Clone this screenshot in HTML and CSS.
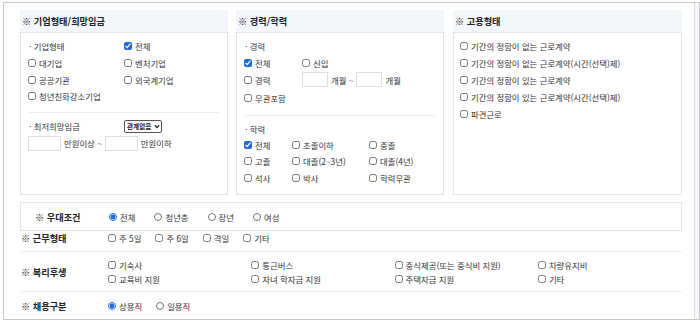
FILE: index.html
```html
<!DOCTYPE html>
<html lang="ko">
<head>
    <meta charset="UTF-8">
    <title>상세검색</title>
    <link rel="stylesheet" href="styles.css">
</head>
<body>
    <div class="frame">
        <div class="content">
            <div class="cols">
                <section class="panel panel-company">
                    <h3 class="panel-title">※ 기업형태/희망임금</h3>
                    <div class="panel-body">
                        <div class="grid grid-company">
                            <span class="sub">· 기업형태</span>
                            <label class="chk"><input type="checkbox" checked>전체</label>
                            <label class="chk"><input type="checkbox">대기업</label>
                            <label class="chk"><input type="checkbox">벤처기업</label>
                            <label class="chk"><input type="checkbox">공공기관</label>
                            <label class="chk"><input type="checkbox">외국계기업</label>
                            <label class="chk"><input type="checkbox">청년친화강소기업</label>
                        </div>
                        <hr class="sep">
                        <div class="grid grid-company">
                            <span class="sub">· 최저희망임금</span>
                            <div class="select"><span>관계없음</span>
                                <svg width="6" height="5" viewBox="0 0 6 5"><path d="M0.8 1.2 L3 3.6 L5.2 1.2" fill="none" stroke="#222" stroke-width="1.3"/></svg>
                            </div>
                        </div>
                        <div class="range">
                            <input type="text" class="num">
                            <span>만원이상 ~</span>
                            <input type="text" class="num">
                            <span>만원이하</span>
                        </div>
                    </div>
                </section>

                <section class="panel panel-career">
                    <h3 class="panel-title">※ 경력/학력</h3>
                    <div class="panel-body">
                        <div class="sub sub-line">· 경력</div>
                        <div class="grid grid-career">
                            <label class="chk"><input type="checkbox" checked>전체</label>
                            <label class="chk"><input type="checkbox">신입</label>
                            <label class="chk"><input type="checkbox">경력</label>
                            <div class="range range-month">
                                <input type="text" class="num num-sm">
                                <span>개월 ~</span>
                                <input type="text" class="num num-sm">
                                <span>개월</span>
                            </div>
                            <label class="chk"><input type="checkbox">무관포함</label>
                        </div>
                        <hr class="sep sep-career">
                        <div class="sub sub-line">· 학력</div>
                        <div class="grid grid-edu">
                            <label class="chk"><input type="checkbox" checked>전체</label>
                            <label class="chk"><input type="checkbox">초졸이하</label>
                            <label class="chk"><input type="checkbox">중졸</label>
                            <label class="chk"><input type="checkbox">고졸</label>
                            <label class="chk"><input type="checkbox">대졸(2~3년)</label>
                            <label class="chk"><input type="checkbox">대졸(4년)</label>
                            <label class="chk"><input type="checkbox">석사</label>
                            <label class="chk"><input type="checkbox">박사</label>
                            <label class="chk"><input type="checkbox">학력무관</label>
                        </div>
                    </div>
                </section>

                <section class="panel panel-employ">
                    <h3 class="panel-title">※ 고용형태</h3>
                    <div class="panel-body">
                        <div class="list">
                            <label class="chk"><input type="checkbox">기간의 정함이 없는 근로계약</label>
                            <label class="chk"><input type="checkbox">기간의 정함이 없는 근로계약(시간(선택)제)</label>
                            <label class="chk"><input type="checkbox">기간의 정함이 있는 근로계약</label>
                            <label class="chk"><input type="checkbox">기간의 정함이 있는 근로계약(시간(선택)제)</label>
                            <label class="chk"><input type="checkbox">파견근로</label>
                        </div>
                    </div>
                </section>
            </div>

            <div class="pref">
                <span class="row-label">※ 우대조건</span>
                <div class="opts">
                    <label class="chk"><input type="radio" name="pref" checked>전체</label>
                    <label class="chk"><input type="radio" name="pref">청년층</label>
                    <label class="chk"><input type="radio" name="pref">장년</label>
                    <label class="chk"><input type="radio" name="pref">여성</label>
                </div>
            </div>

            <div class="row row-work">
                <span class="row-label">※ 근무형태</span>
                <div class="opts opts-work">
                    <label class="chk"><input type="checkbox">주 5일</label>
                    <label class="chk"><input type="checkbox">주 6일</label>
                    <label class="chk"><input type="checkbox">격일</label>
                    <label class="chk"><input type="checkbox">기타</label>
                </div>
            </div>

            <div class="row row-welfare">
                <span class="row-label">※ 복리후생</span>
                <div class="grid grid-welfare">
                    <label class="chk"><input type="checkbox">기숙사</label>
                    <label class="chk"><input type="checkbox">통근버스</label>
                    <label class="chk"><input type="checkbox">중식제공(또는 중식비 지원)</label>
                    <label class="chk"><input type="checkbox">차량유지비</label>
                    <label class="chk"><input type="checkbox">교육비 지원</label>
                    <label class="chk"><input type="checkbox">자녀 학자금 지원</label>
                    <label class="chk"><input type="checkbox">주택자금 지원</label>
                    <label class="chk"><input type="checkbox">기타</label>
                </div>
            </div>

            <div class="row row-hire">
                <span class="row-label">※ 채용구분</span>
                <div class="opts opts-hire">
                    <label class="chk"><input type="radio" name="hire" checked>상용직</label>
                    <label class="chk"><input type="radio" name="hire">일용직</label>
                </div>
            </div>
        </div>
        <div class="scrollbar"></div>
    </div>
</body>
</html>
```

FILE: styles.css
```css
* { margin: 0; padding: 0; box-sizing: border-box; }

body {
    font-family: "Noto Sans CJK KR", "Noto Sans", sans-serif;
    font-size: 8.4px;
    color: #333;
    background: #fff;
}

.frame {
    display: flex;
    width: 697px;
    height: 318px;
    margin: 2px 0 0 3px;
    border: 1px solid #c7c9cc;
}

.content {
    flex: 1;
    padding: 7px 12px 0 16px;
}

.scrollbar {
    width: 6px;
    border-left: 1px solid #d9dde2;
    background: #f6f8fa;
}

.cols {
    display: flex;
    gap: 8px;
}

.panel-company,
.panel-career { width: 208px; }
.panel-employ { width: 229px; margin-left: 1px; }

.panel-title {
    height: 22px;
    line-height: 22px;
    padding-left: 2px;
    font-size: 9.2px;
    font-weight: bold;
    color: #222;
    background: #f3f6fb;
}

.panel-body {
    height: 163px;
    border: 1px solid #e2e5e9;
    padding: 5px 7px 0 7px;
}

.grid {
    display: grid;
    align-items: center;
}

.grid-company {
    grid-template-columns: 96px 1fr;
    grid-auto-rows: 16.7px;
}

.sub { color: #333; padding-left: 1px; }
.sub-line { height: 16.5px; line-height: 16.5px; }

.chk {
    display: flex;
    align-items: center;
    gap: 3px;
    white-space: nowrap;
}

.chk input {
    width: 8px;
    height: 8px;
    margin: 0;
    accent-color: #1f6ad6;
    flex: none;
}

.sep {
    border: none;
    border-top: 1px solid #eceef1;
    margin: 7px 0 5px;
}

.select {
    display: flex;
    align-items: center;
    justify-content: space-between;
    width: 38px;
    height: 13px;
    padding: 0 1px 0 2px;
    border: 1px solid #555;
    border-radius: 2px;
    font-size: 6.6px;
    font-weight: bold;
    color: #222;
    white-space: nowrap;
}

.range {
    display: flex;
    align-items: center;
    gap: 3px;
    height: 18px;
}

.num {
    width: 33px;
    height: 15px;
    border: 1px solid #dcdfe3;
    background: #fff;
}

.num-sm { width: 26px; }

.grid-career {
    grid-template-columns: 58px 1fr;
    grid-template-rows: 16.5px 17.5px 19px;
}

.sep-career { margin: 7px 0 5px; }

.grid-edu {
    grid-template-columns: 48px 77px 1fr;
    grid-auto-rows: 16.3px;
}

.list {
    display: grid;
    grid-auto-rows: 16.8px;
    align-items: center;
    margin-left: -1px;
}

.pref {
    display: flex;
    align-items: center;
    height: 29px;
    margin-top: 7px;
    border: 1px solid #e2e5e9;
    padding-left: 14px;
}

.row-label {
    font-size: 9.2px;
    font-weight: bold;
    color: #222;
    width: 73px;
    flex: none;
}

.pref .row-label { width: 74px; }

.opts {
    display: flex;
    gap: 19px;
}

.opts-work { gap: 14px; }
.opts-hire { gap: 14px; }

.row {
    display: flex;
    align-items: center;
    border-bottom: 1px solid #eceef1;
}

.row .row-label { width: 88px; padding-left: 1px; }

.row-work { height: 21px; padding-bottom: 6px; }

.row-welfare { height: 40px; }

.grid-welfare {
    grid-template-columns: repeat(4, 143.3px);
    grid-auto-rows: 14px;
}

.row-hire { height: 27px; border-bottom: none; }
```
